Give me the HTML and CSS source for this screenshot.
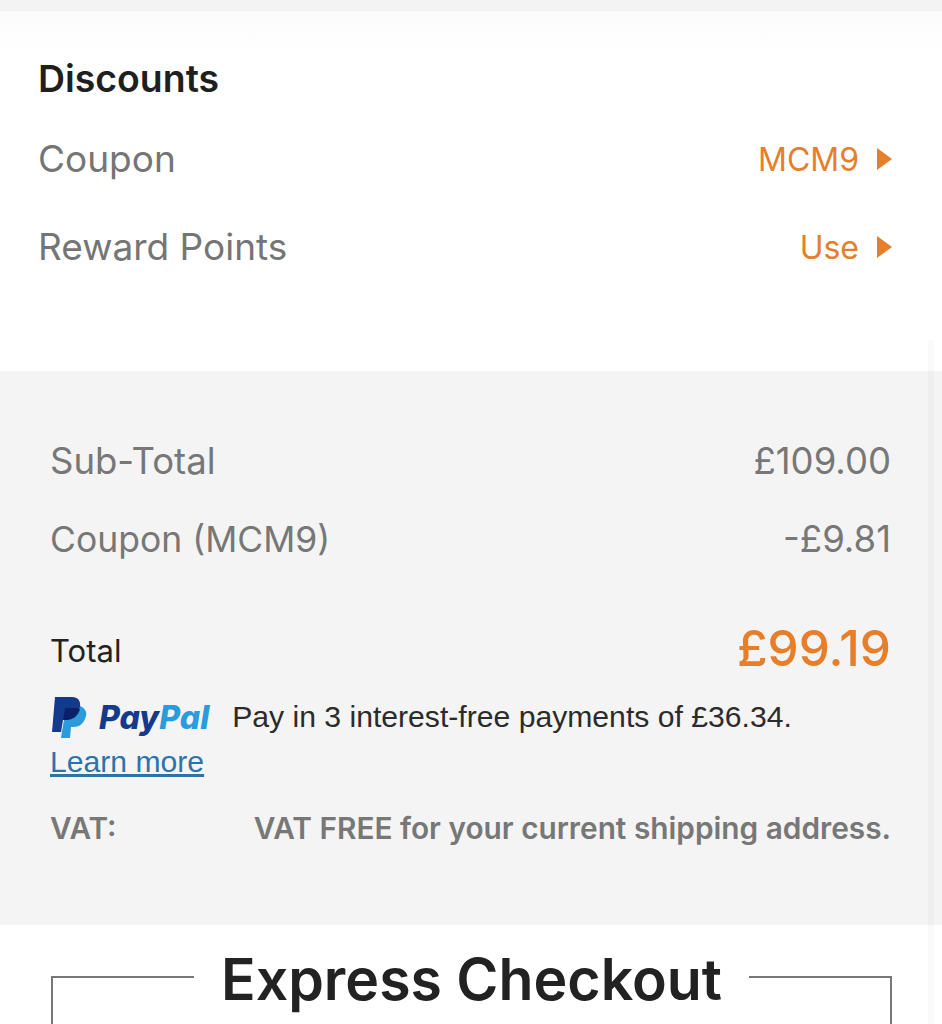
FILE: index.html
```html
<!DOCTYPE html>
<html lang="en">
  <head>
    <meta charset="UTF-8" />
    <meta name="viewport" content="width=device-width, initial-scale=1.0" />
    <title>Checkout</title>
    <link rel="stylesheet" href="styles.css">
  </head>
  <body>
    <div class="top-strip"></div>

    <!-- Discounts -->
    <section class="discounts">
      <h2>Discounts</h2>
      <div class="discount-row">
        <span>Coupon</span>
        <a class="discount-action" href="#">MCM9 <i class="arrow"></i></a>
      </div>
      <div class="discount-row">
        <span>Reward Points</span>
        <a class="discount-action" href="#">Use <i class="arrow"></i></a>
      </div>
    </section>

    <!-- Order summary -->
    <section class="summary">
      <div class="summary-row">
        <span>Sub-Total</span>
        <span>£109.00</span>
      </div>
      <div class="summary-row coupon-row">
        <span>Coupon (MCM9)</span>
        <span>-£9.81</span>
      </div>
      <div class="total-row">
        <span class="total-label">Total</span>
        <span class="total-price">£99.19</span>
      </div>
      <div class="paypal">
        <div class="paypal-line">
          <svg class="paypal-mark" viewBox="0 0 35 41" aria-hidden="true">
            <path fill="#2a9bdc" d="M28 9c5 2 7 6 6 10-2 8-7 11-13 11h-2l-1 11H9l1-7 2-11h2c8 0 12.500-5 14-13z"/>
            <path fill="#143a8c" d="M3 0h17c6 0 9 4 8 10-1.500 8-6 13-14 13h-3L9 35H0z"/>
            <path fill="#0c1f6b" d="M13 11h10c2 0 4 .5 5 1-2 7-7 11-14 11h-3z"/>
          </svg>
          <span class="paypal-word"><span class="pay">Pay</span><span class="pal">Pal</span></span>
          <span class="paypal-text">Pay in 3 interest-free payments of £36.34.</span>
        </div>
        <a class="learn-more" href="#">Learn more</a>
      </div>
      <div class="vat-row">
        <span>VAT:</span>
        <span>VAT FREE for your current shipping address.</span>
      </div>
    </section>

    <!-- Express checkout -->
    <section class="express">
      <fieldset>
        <legend>Express Checkout</legend>
      </fieldset>
    </section>

    <div class="scroll-track"></div>
  </body>
</html>
```

FILE: styles.css
```css
html,
body {
  height: 1024px;
  overflow: hidden;
}

body {
  margin: 0;
  padding: 0;
  background-color: #ffffff;
  color: #222222;
  font-family: Inter, "Open Sans", Arial, sans-serif;
  position: relative;
}

.top-strip {
  height: 11px;
  background-color: #f3f3f3;
}

.discounts {
  height: 360px;
  box-sizing: border-box;
  padding: 46px 50px 0 38px;
  background: linear-gradient(#fbfbfb, #ffffff 40px);
}

h2 {
  margin: 0 0 20px 0;
  font-size: 37.400px;
  line-height: 43px;
  font-weight: 600;
  color: #1f1f1f;
}

.discount-row {
  display: flex;
  justify-content: space-between;
  align-items: center;
  height: 88px;
  margin-top: -6px;
  margin-bottom: 6px;
  font-size: 37px;
  color: #757575;
}

.discount-action {
  display: flex;
  align-items: center;
  gap: 18px;
  margin-top: 2px;
  font-size: 32px;
  color: #e67e2a;
  text-decoration: none;
}

.arrow {
  display: block;
  width: 0;
  height: 0;
  border-left: 15px solid #e67e2a;
  border-top: 11px solid transparent;
  border-bottom: 11px solid transparent;
}

.summary {
  height: 554px;
  box-sizing: border-box;
  padding: 66px 51px 0 50px;
  background-color: #f4f4f4;
}

.summary-row {
  display: flex;
  justify-content: space-between;
  align-items: center;
  height: 48px;
  font-size: 36.500px;
  color: #777777;
}

.coupon-row {
  margin-top: 30px;
}

.coupon-row span:first-child {
  font-size: 35.500px;
}

.total-row {
  display: flex;
  justify-content: space-between;
  align-items: flex-start;
  height: 60px;
  margin-top: 53px;
}

.total-label {
  margin-top: 17px;
  font-size: 31px;
  line-height: 36px;
  color: #222222;
}

.total-price {
  margin-top: 2px;
  font-size: 49.500px;
  line-height: 60px;
  font-weight: 500;
  color: #e67e2a;
}

.paypal {
  margin-top: 19px;
}

.paypal-line {
  display: flex;
  align-items: center;
  height: 44px;
  margin-left: 2px;
}

.paypal-mark {
  width: 35px;
  height: 41px;
  flex-shrink: 0;
}

.paypal-word {
  margin-left: 12px;
  font-family: Inter, Arial, sans-serif;
  font-size: 32px;
  font-weight: 800;
  font-style: italic;
}

.pay {
  color: #143a8c;
}

.pal {
  color: #2a9bdc;
}

.paypal-text {
  margin-left: 23px;
  font-family: "Liberation Sans", Arial, sans-serif;
  font-size: 30.150px;
  color: #2b2b2b;
}

.learn-more {
  display: inline-block;
  margin-top: 2px;
  font-family: "Liberation Sans", Arial, sans-serif;
  font-size: 30.150px;
  line-height: 42px;
  color: #2b74ab;
}

.vat-row {
  display: flex;
  justify-content: space-between;
  align-items: center;
  margin-top: 27px;
  font-size: 29.800px;
  font-weight: 600;
  color: #777777;
}

.express {
  padding: 0 50px 0 51px;
}

fieldset {
  margin: 18px 0 0 0;
  padding: 0;
  height: 200px;
  border: 2px solid #777777;
}

legend {
  margin: 0 auto;
  padding: 6px 27px 0;
  font-size: 57.200px;
  line-height: 62px;
  font-weight: 600;
  color: #222222;
}

/* faint scrollbar track on top of the page */
.scroll-track {
  position: absolute;
  top: 340px;
  bottom: 0;
  left: 928px;
  width: 6px;
  background-color: rgba(0, 0, 0, 0.02);
}
```
